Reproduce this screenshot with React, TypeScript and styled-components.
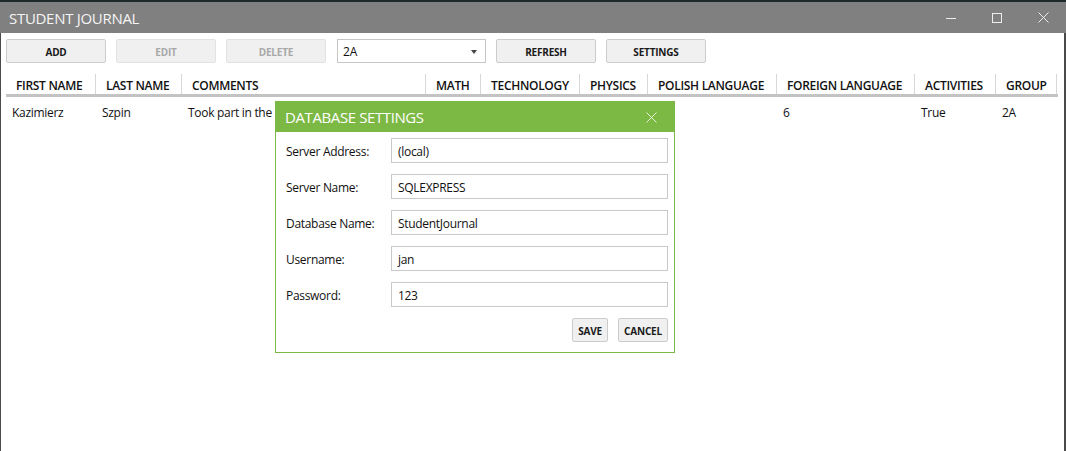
import React from "react";
import styled, { createGlobalStyle } from "styled-components";

const GlobalStyle = createGlobalStyle`
  html, body { margin: 0; padding: 0; background: #ffffff; }
  body { font-family: "Noto Sans", "Open Sans", Arial, sans-serif; }
  * { box-sizing: border-box; }
`;

const Window = styled.div`
  position: relative;
  width: 1066px;
  height: 451px;
  display: flex;
  flex-direction: column;
  overflow: hidden;
  background: #ffffff;
`;

const TopStrip = styled.div`
  height: 2px;
  background: #1d2a29;
  flex-shrink: 0;
`;

const TitleBar = styled.div`
  height: 31px;
  background: #808080;
  display: flex;
  align-items: center;
  padding-left: 9px;
  flex-shrink: 0;
`;

const Title = styled.div`
  color: #f4f4f4;
  font-family: "Open Sans", "Noto Sans", sans-serif;
  font-size: 15px;
  letter-spacing: -0.3px;
  padding-top: 1px;
  flex: 1;
`;

const Controls = styled.div`
  display: flex;
  height: 100%;
`;

const Control = styled.div`
  width: 46px;
  height: 100%;
  display: flex;
  align-items: center;
  justify-content: center;
`;

const Content = styled.div`
  flex: 1;
  border-left: 1px solid #4a4a4a;
  border-right: 2px solid #4a4a4a;
  display: flex;
  flex-direction: column;
`;

const Toolbar = styled.div`
  display: flex;
  gap: 10px;
  padding: 6px 5px 0 5px;
  height: 30px;
`;

const Button = styled.div<{ $disabled?: boolean; $w?: number }>`
  width: ${(p) => p.$w ?? 100}px;
  height: 24px;
  background: #f0f0f0;
  border: 1px solid ${(p) => (p.$disabled ? "#e2e2e2" : "#cccccc")};
  border-radius: 2px;
  display: flex;
  align-items: center;
  justify-content: center;
  padding-top: 1px;
  font-family: "Open Sans", "Noto Sans", sans-serif;
  font-weight: 700;
  font-size: 10px;
  letter-spacing: -0.2px;
  color: ${(p) => (p.$disabled ? "#a8a8a8" : "#1a1a1a")};
`;

const Combo = styled.div`
  width: 149px;
  margin-left: 1px;
  height: 24px;
  border: 1px solid #c6c6c6;
  background: #fff;
  display: flex;
  align-items: center;
  padding: 1px 8px 0 5px;
  font-family: "Open Sans", "Noto Sans", sans-serif;
  font-size: 12px;
  color: #111;
  justify-content: space-between;
`;

const Arrow = styled.div`
  width: 0;
  height: 0;
  border-left: 3.5px solid transparent;
  border-right: 3.5px solid transparent;
  border-top: 4px solid #444;
`;

const Grid = styled.div`
  margin-top: 9px;
  padding-left: 5px;
  display: flex;
  flex-direction: column;
`;

const HeaderRow = styled.div`
  display: flex;
  height: 25px;
  width: 1052px;
  border-bottom: 3px solid #c3c3c3;
`;

const HeaderCell = styled.div<{ $w: number }>`
  width: ${(p) => p.$w}px;
  flex-shrink: 0;
  display: flex;
  align-items: center;
  padding-left: 10px;
  padding-top: 2px;
  border-right: 1px solid #d8d8d8;
  margin-top: 2px;
  font-family: "Open Sans", "Noto Sans", sans-serif;
  font-weight: 600;
  font-size: 12px;
  letter-spacing: -0.3px;
  color: #111;
  white-space: nowrap;
`;

const DataRow = styled.div`
  display: flex;
  height: 28px;
  padding-top: 3px;
`;

const DataCell = styled.div<{ $w: number }>`
  width: ${(p) => p.$w}px;
  flex-shrink: 0;
  display: flex;
  align-items: center;
  padding-left: 6px;
  font-family: "Open Sans", "Noto Sans", sans-serif;
  font-size: 12px;
  letter-spacing: -0.3px;
  color: #111;
  white-space: nowrap;
  overflow: hidden;
`;

const Dialog = styled.div`
  position: absolute;
  left: 275px;
  top: 101px;
  width: 400px;
  height: 252px;
  display: flex;
  flex-direction: column;
`;

const DialogHeader = styled.div`
  height: 31px;
  background: #7cb844;
  display: flex;
  align-items: center;
  padding: 1px 0 0 10px;
`;

const DialogTitle = styled.div`
  flex: 1;
  color: #ffffff;
  font-family: "Open Sans", "Noto Sans", sans-serif;
  font-size: 15px;
  letter-spacing: -0.4px;
`;

const DialogClose = styled.div`
  width: 48px;
  height: 100%;
  display: flex;
  align-items: center;
  justify-content: center;
`;

const DialogBody = styled.div`
  flex: 1;
  background: #fff;
  border: 1px solid #7cb844;
  border-top: none;
  padding: 6px 6px 9px 10px;
  display: flex;
  flex-direction: column;
  gap: 11px;
`;

const FieldRow = styled.div`
  display: flex;
  align-items: center;
  height: 25px;
`;

const Label = styled.div`
  width: 105px;
  padding-top: 2px;
  font-family: "Open Sans", "Noto Sans", sans-serif;
  font-size: 12px;
  letter-spacing: -0.3px;
  color: #111;
`;

const Input = styled.div`
  flex: 1;
  height: 25px;
  border: 1px solid #c9c9c9;
  display: flex;
  align-items: center;
  padding: 2px 0 0 6px;
  font-family: "Open Sans", "Noto Sans", sans-serif;
  font-size: 12px;
  letter-spacing: -0.3px;
  color: #111;
`;

const DialogActions = styled.div`
  display: flex;
  justify-content: flex-end;
  gap: 10px;
`;

const columns = [
  { name: "FIRST NAME", w: 90, v: "Kazimierz" },
  { name: "LAST NAME", w: 86, v: "Szpin" },
  { name: "COMMENTS", w: 244, v: "Took part in the" },
  { name: "MATH", w: 55, v: "" },
  { name: "TECHNOLOGY", w: 99, v: "" },
  { name: "PHYSICS", w: 68, v: "" },
  { name: "POLISH LANGUAGE", w: 129, v: "" },
  { name: "FOREIGN LANGUAGE", w: 138, v: "6" },
  { name: "ACTIVITIES", w: 81, v: "True" },
  { name: "GROUP", w: 61, v: "2A" },
];

const fields = [
  ["Server Address:", "(local)"],
  ["Server Name:", "SQLEXPRESS"],
  ["Database Name:", "StudentJournal"],
  ["Username:", "jan"],
  ["Password:", "123"],
];

export default function App() {
  return (
    <>
      <GlobalStyle />
      <Window>
        <TopStrip />
        <TitleBar>
          <Title>STUDENT JOURNAL</Title>
          <Controls>
            <Control>
              <svg width="10" height="10" viewBox="0 0 10 10">
                <line x1="0" y1="5.5" x2="10" y2="5.5" stroke="#eeeeee" strokeWidth="1" />
              </svg>
            </Control>
            <Control>
              <svg width="10" height="10" viewBox="0 0 10 10">
                <rect x="0.5" y="0.5" width="9" height="9" fill="none" stroke="#eeeeee" strokeWidth="1" />
              </svg>
            </Control>
            <Control>
              <svg width="11" height="11" viewBox="0 0 11 11">
                <path d="M0.5 0.5 L10.5 10.5 M10.5 0.5 L0.5 10.5" stroke="#eeeeee" strokeWidth="1" />
              </svg>
            </Control>
          </Controls>
        </TitleBar>
        <Content>
          <Toolbar>
            <Button>ADD</Button>
            <Button $disabled>EDIT</Button>
            <Button $disabled>DELETE</Button>
            <Combo>
              <span>2A</span>
              <Arrow />
            </Combo>
            <Button>REFRESH</Button>
            <Button>SETTINGS</Button>
          </Toolbar>
          <Grid>
            <HeaderRow>
              {columns.map((c) => (
                <HeaderCell key={c.name} $w={c.w}>
                  {c.name}
                </HeaderCell>
              ))}
            </HeaderRow>
            <DataRow>
              {columns.map((c) => (
                <DataCell key={c.name} $w={c.w}>
                  {c.v}
                </DataCell>
              ))}
            </DataRow>
          </Grid>
        </Content>
        <Dialog>
          <DialogHeader>
            <DialogTitle>DATABASE SETTINGS</DialogTitle>
            <DialogClose>
              <svg width="11" height="11" viewBox="0 0 11 11">
                <path d="M0.5 0.5 L10.5 10.5 M10.5 0.5 L0.5 10.5" stroke="#e6f2da" strokeWidth="1" />
              </svg>
            </DialogClose>
          </DialogHeader>
          <DialogBody>
            {fields.map(([l, v]) => (
              <FieldRow key={l}>
                <Label>{l}</Label>
                <Input>{v}</Input>
              </FieldRow>
            ))}
            <DialogActions>
              <Button $w={36}>SAVE</Button>
              <Button $w={50}>CANCEL</Button>
            </DialogActions>
          </DialogBody>
        </Dialog>
      </Window>
    </>
  );
}
